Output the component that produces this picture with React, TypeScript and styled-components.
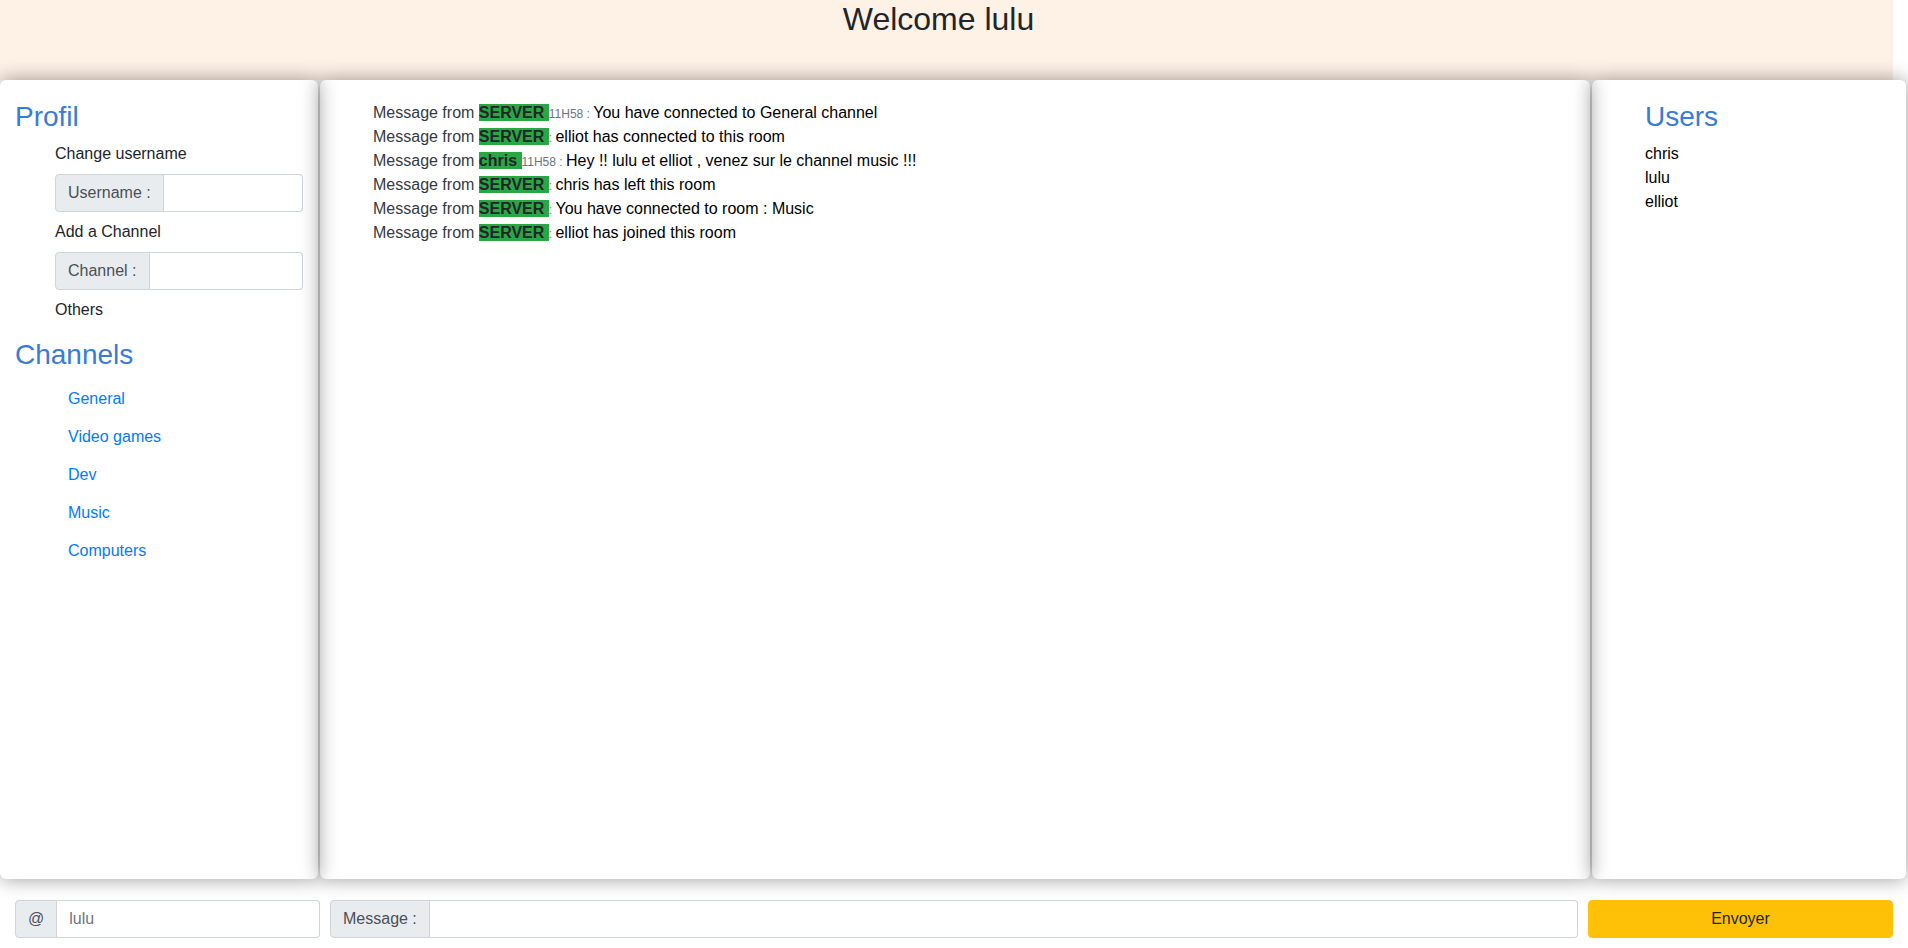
import React from "react";
import styled, { createGlobalStyle } from "styled-components";

const GlobalStyle = createGlobalStyle`
  html, body {
    margin: 0;
    padding: 0;
    background: #ffffff;
  }
  body {
    font-family: "Liberation Sans", Arial, Helvetica, sans-serif;
    font-size: 16px;
    line-height: 1.5;
    color: #212529;
  }
  * { box-sizing: border-box; }
`;

const Page = styled.div`
  width: 1908px;
  overflow: hidden;
`;

const Header = styled.header`
  width: 1893px;
  height: 80px;
  background: #fef1e6;
  padding-right: 16px;
  text-align: center;
`;

const Title = styled.h2`
  margin: 0;
  font-size: 32px;
  font-weight: 500;
  line-height: 1.2;
  color: #212529;
`;

const Panels = styled.div`
  display: flex;
  gap: 2px;
  width: 1908px;
  height: 799px;
`;

const Panel = styled.section<{ $width: number; $indent: number; $top?: number }>`
  flex: 0 0 ${(p) => p.$width}px;
  width: ${(p) => p.$width}px;
  height: 100%;
  border-radius: 6px;
  box-shadow: 0 0 20px rgba(0, 0, 0, 0.4);
  padding: ${(p) => p.$top ?? 20}px 15px 0 ${(p) => p.$indent}px;
`;

const SectionTitle = styled.h3`
  margin: 0 0 8px;
  font-size: 28px;
  font-weight: 500;
  line-height: 1.2;
  color: #3a7bd5;
`;

const ProfileList = styled.ul`
  list-style: none;
  margin: 0 0 16px;
  padding: 0 0 0 40px;
  display: flex;
  flex-direction: column;
  gap: 8px;
`;

const Item = styled.li`
  line-height: 1.5;
`;

const InputGroup = styled.div`
  display: flex;
  height: 38px;
  width: 100%;
`;

const Addon = styled.span`
  display: flex;
  align-items: center;
  padding: 0 12px;
  background: #e9ecef;
  color: #495057;
  border: 1px solid #ced4da;
  border-radius: 4px 0 0 4px;
  white-space: nowrap;
  font-size: 16px;
`;

const Field = styled.input`
  flex: 1 1 auto;
  min-width: 0;
  height: 38px;
  margin: 0;
  padding: 6px 12px;
  font-family: inherit;
  font-size: 16px;
  color: #495057;
  background: #fff;
  border: 1px solid #ced4da;
  border-left: none;
  border-radius: 0 4px 4px 0;
  outline: none;
  &::placeholder {
    color: #6c757d;
  }
`;

const ChannelList = styled.ul`
  list-style: none;
  margin: 0;
  padding: 1px 0 0 40px;
`;

const ChannelButton = styled.button`
  display: block;
  height: 38px;
  padding: 6px 12px;
  border: 1px solid transparent;
  background: transparent;
  color: #007bff;
  font-family: inherit;
  font-size: 16px;
  line-height: 1.5;
  cursor: pointer;
`;

const MessageList = styled.ul`
  list-style: none;
  margin: 0;
  padding: 0;
`;

const MessageLine = styled.li`
  line-height: 1.5;
  color: #000;
  white-space: nowrap;
`;

const From = styled.span`
  color: #343a40;
`;

const Sender = styled.span`
  background: #28a745;
  font-weight: 700;
  color: #212529;
`;

const Meta = styled.small`
  font-size: 12px;
  color: #6c757d;
`;

const UserList = styled.ul`
  list-style: none;
  margin: 0;
  padding: 0;
`;

const User = styled.li`
  line-height: 1.5;
  color: #000;
`;

const Composer = styled.form`
  display: grid;
  grid-template-columns: 305px 1248px 305px;
  gap: 10px;
  margin: 21px 0 0;
  padding-left: 15px;
  width: 1893px;
`;

const SendButton = styled.button`
  height: 38px;
  padding: 6px 12px;
  background: #ffc107;
  border: 1px solid #ffc107;
  border-radius: 4px;
  color: #212529;
  font-family: inherit;
  font-size: 16px;
  line-height: 1.5;
  cursor: pointer;
`;

type Msg = { from: string; time?: string; text: string };

const messages: Msg[] = [
  { from: "SERVER", time: "11H58", text: "You have connected to General channel" },
  { from: "SERVER", text: "elliot has connected to this room" },
  { from: "chris", time: "11H58", text: "Hey !! lulu et elliot , venez sur le channel music !!!" },
  { from: "SERVER", text: "chris has left this room" },
  { from: "SERVER", text: "You have connected to room : Music" },
  { from: "SERVER", text: "elliot has joined this room" },
];

const channels = ["General", "Video games", "Dev", "Music", "Computers"];
const users = ["chris", "lulu", "elliot"];

export default function App() {
  return (
    <Page>
      <GlobalStyle />
      <Header>
        <Title>Welcome lulu</Title>
      </Header>
      <Panels>
        <Panel $width={318} $indent={15}>
          <SectionTitle>Profil</SectionTitle>
          <ProfileList>
            <Item>Change username</Item>
            <Item>
              <InputGroup>
                <Addon>Username :</Addon>
                <Field type="text" />
              </InputGroup>
            </Item>
            <Item>Add a Channel</Item>
            <Item>
              <InputGroup>
                <Addon>Channel :</Addon>
                <Field type="text" />
              </InputGroup>
            </Item>
            <Item>Others</Item>
          </ProfileList>
          <SectionTitle>Channels</SectionTitle>
          <ChannelList>
            {channels.map((c) => (
              <li key={c}>
                <ChannelButton type="button">{c}</ChannelButton>
              </li>
            ))}
          </ChannelList>
        </Panel>
        <Panel $width={1270} $indent={53} $top={21}>
          <MessageList>
            {messages.map((m, i) => (
              <MessageLine key={i}>
                <From>Message from </From>
                <Sender>{m.from + " "}</Sender>
                <Meta>{m.time ? `${m.time} : ` : ": "}</Meta>
                {m.text}
              </MessageLine>
            ))}
          </MessageList>
        </Panel>
        <Panel $width={314} $indent={53}>
          <SectionTitle>Users</SectionTitle>
          <UserList>
            {users.map((u) => (
              <User key={u}>{u}</User>
            ))}
          </UserList>
        </Panel>
      </Panels>
      <Composer onSubmit={(e) => e.preventDefault()}>
        <InputGroup>
          <Addon>@</Addon>
          <Field type="text" placeholder="lulu" />
        </InputGroup>
        <InputGroup>
          <Addon>Message :</Addon>
          <Field type="text" />
        </InputGroup>
        <SendButton type="submit">Envoyer</SendButton>
      </Composer>
    </Page>
  );
}
